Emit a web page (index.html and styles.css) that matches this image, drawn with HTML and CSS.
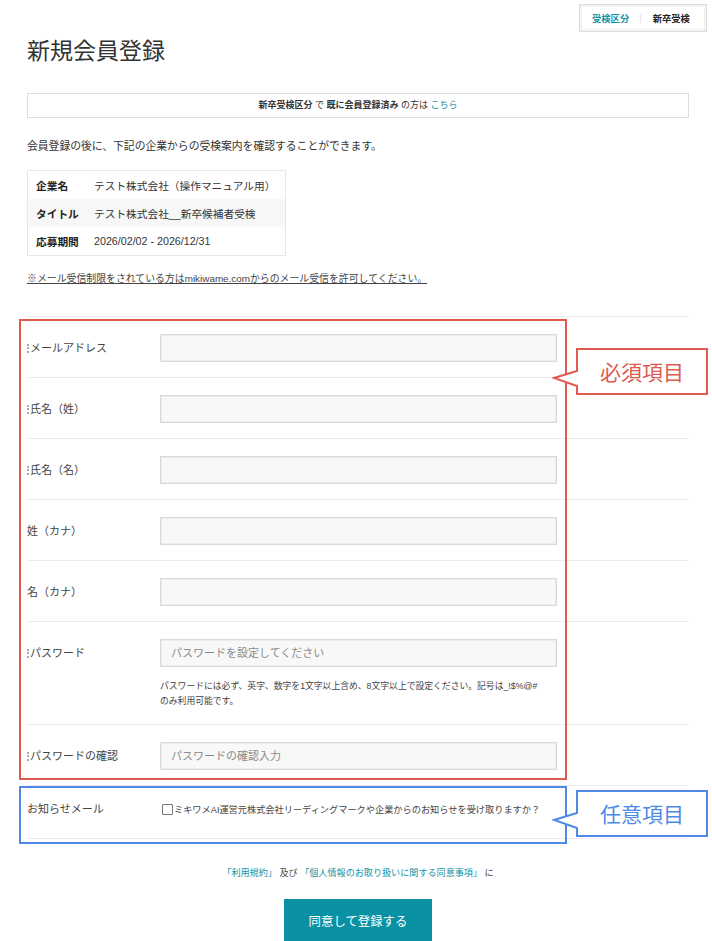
FILE: index.html
```html
<!DOCTYPE html>
<html lang="ja">
<head>
    <meta charset="UTF-8">
    <meta name="viewport" content="width=device-width, initial-scale=1.0">
    <title>新規会員登録</title>
    <link rel="stylesheet" href="styles.css">
</head>
<body>
    <div class="page">
        <div class="topbar">
            <div class="exam-tab">
                <span class="tab-key">受検区分</span>
                <span class="tab-sep">|</span>
                <span class="tab-value">新卒受検</span>
            </div>
        </div>

        <h1 class="title">新規会員登録</h1>

        <div class="notice">
            <b>新卒受検区分</b> で <b>既に会員登録済み</b> の方は <a href="#">こちら</a>
        </div>

        <p class="intro">会員登録の後に、下記の企業からの受検案内を確認することができます。</p>

        <table class="info">
            <tr>
                <th>企業名</th>
                <td>テスト株式会社（操作マニュアル用）</td>
            </tr>
            <tr class="alt">
                <th>タイトル</th>
                <td>テスト株式会社__新卒候補者受検</td>
            </tr>
            <tr>
                <th>応募期間</th>
                <td>2026/02/02 - 2026/12/31</td>
            </tr>
        </table>

        <p class="mail-note">※メール受信制限をされている方はmikiwame.comからのメール受信を許可してください。</p>

        <div class="form">
            <div class="row">
                <div class="label req">メールアドレス</div>
                <div class="field"><input class="input" type="text"></div>
            </div>
            <div class="row">
                <div class="label req">氏名（姓）</div>
                <div class="field"><input class="input" type="text"></div>
            </div>
            <div class="row">
                <div class="label req">氏名（名）</div>
                <div class="field"><input class="input" type="text"></div>
            </div>
            <div class="row">
                <div class="label">姓（カナ）</div>
                <div class="field"><input class="input" type="text"></div>
            </div>
            <div class="row">
                <div class="label">名（カナ）</div>
                <div class="field"><input class="input" type="text"></div>
            </div>
            <div class="row">
                <div class="label req">パスワード</div>
                <div class="field">
                    <input class="input" type="text" placeholder="パスワードを設定してください">
                    <p class="hint">パスワードには必ず、英字、数字を1文字以上含め、8文字以上で設定ください。記号は_!$%@#<br>のみ利用可能です。</p>
                </div>
            </div>
            <div class="row">
                <div class="label req">パスワードの確認</div>
                <div class="field"><input class="input" type="text" placeholder="パスワードの確認入力"></div>
            </div>
            <div class="row row-news">
                <div class="label">お知らせメール</div>
                <div class="field">
                    <label class="check"><span class="box"></span>ミキワメAI運営元株式会社リーディングマークや企業からのお知らせを受け取りますか？</label>
                </div>
            </div>
        </div>

        <p class="terms"><a href="#">「利用規約」</a> 及び <a href="#">「個人情報のお取り扱いに関する同意事項」</a> に</p>

        <div class="actions">
            <button class="submit">同意して登録する</button>
        </div>

        <!-- 注釈 -->
        <div class="frame frame-red"></div>
        <div class="frame frame-blue"></div>
        <div class="callout callout-red">
            <svg width="157" height="48" viewBox="0 0 157 48"><path d="M25 1 H155 V46 H25 V38 L2 30 L25 23 Z"/></svg>
            <span>必須項目</span>
        </div>
        <div class="callout callout-blue">
            <svg width="157" height="48" viewBox="0 0 157 48"><path d="M25 1 H155 V46 H25 V38 L2 30 L25 23 Z"/></svg>
            <span>任意項目</span>
        </div>
    </div>
</body>
</html>
```

FILE: styles.css
```css
body {
    margin: 0;
    background-color: #fff;
    color: #333;
    font-family: "Liberation Sans", "Noto Sans CJK JP", sans-serif;
}
a {
    color: #1493a6;
    text-decoration: none;
}
.page {
    position: relative;
    padding: 0 23px 0 27px;
}
.topbar {
    display: flex;
    justify-content: flex-end;
    padding-top: 4px;
    margin-right: -18px;
}
.exam-tab {
    display: flex;
    align-items: center;
    width: 128px;
    height: 28px;
    box-sizing: border-box;
    padding-left: 12px;
    border: 1px solid #dcdcdc;
    box-shadow: inset 0 0 0 2px #f2f2f2;
    font-size: 9.3px;
    font-weight: bold;
}
.tab-key {
    color: #1493a6;
}
.tab-sep {
    color: #ddd;
    font-weight: normal;
    margin: 0 11px 0 10px;
}
.tab-value {
    color: #222;
}
.title {
    margin: 4px 0 0;
    font-size: 23px;
    line-height: 30px;
    font-weight: normal;
    color: #333;
}
.notice {
    margin-top: 27px;
    height: 25px;
    box-sizing: border-box;
    border: 1px solid #ddd;
    text-align: center;
    font-size: 9px;
    line-height: 23px;
    color: #333;
}
.intro {
    margin: 19px 0 0;
    font-size: 10.8px;
    line-height: 18px;
}
.info {
    margin-top: 15px;
    width: 259px;
    border-collapse: collapse;
    border: 1px solid #e6e6e6;
    font-size: 10.7px;
}
.info th,
.info td {
    height: 28px;
    padding: 0;
    text-align: left;
}
.info th {
    width: 58px;
    padding-left: 8px;
    font-weight: bold;
    color: #222;
}
.info .alt {
    background-color: #f7f7f7;
}
.mail-note {
    margin: 15px 0 0;
    font-size: 9.9px;
    line-height: 16px;
    text-decoration: underline;
    color: #444;
}
.form {
    margin-top: 29px;
    border-bottom: 1px solid #ececec;
}
.row {
    display: flex;
    align-items: flex-start;
    border-top: 1px solid #ececec;
    padding: 17px 0 15px;
}
.label {
    display: flex;
    align-items: center;
    width: 133px;
    white-space: nowrap;
    font-size: 11px;
    line-height: 28px;
    color: #444;
}
/* 左端で切れた必須マークの名残 */
.label.req::before {
    content: "";
    width: 2px;
    height: 9px;
    margin-right: 1px;
    border-left: 2px dotted #aaa;
    box-sizing: border-box;
}
.field {
    width: 397px;
}
.input {
    display: block;
    width: 100%;
    height: 28px;
    box-sizing: border-box;
    margin: 0;
    padding: 0 10px;
    border: 1px solid #d9d9d9;
    box-shadow: inset 0 0 0 1px #ececec;
    background-color: #f8f8f8;
    font-family: inherit;
    font-size: 11px;
    color: #333;
}
.input::placeholder {
    color: #8a8a8a;
}
.hint {
    margin: 12px 0 0;
    font-size: 8.8px;
    line-height: 15px;
    white-space: nowrap;
    color: #444;
}
.row-news {
    padding: 9px 0 15px;
}
.check {
    display: flex;
    align-items: center;
    height: 28px;
    padding-left: 2px;
    font-size: 9.2px;
    white-space: nowrap;
    color: #444;
}
.box {
    width: 9px;
    height: 9px;
    border: 1px solid #777;
    border-radius: 1px;
    margin-right: 1px;
}
.terms {
    margin: 26px 0 0;
    text-align: center;
    font-size: 9.1px;
    line-height: 16px;
    color: #444;
}
.actions {
    display: flex;
    justify-content: center;
    margin-top: 18px;
}
.submit {
    width: 148px;
    height: 44px;
    border: none;
    background-color: #0a91a3;
    color: #fff;
    font-family: inherit;
    font-size: 12.4px;
    cursor: pointer;
}
.frame {
    position: absolute;
    left: 19px;
    width: 548px;
    box-sizing: border-box;
    border: 2px solid;
}
.frame-red {
    top: 319px;
    height: 461px;
    border-color: #e05a4f;
}
.frame-blue {
    top: 786px;
    height: 58px;
    border-color: #4d8ae6;
}
.callout {
    position: absolute;
    left: 552px;
    width: 157px;
    height: 48px;
}
.callout svg {
    position: absolute;
    top: 0;
    left: 0;
}
.callout path {
    fill: #fff;
    stroke-width: 2;
}
.callout span {
    position: absolute;
    top: 0;
    left: 25px;
    right: 2px;
    line-height: 47px;
    text-align: center;
    font-size: 21px;
    font-family: "Noto Sans CJK JP", sans-serif;
}
.callout-red {
    top: 348px;
}
.callout-red path {
    stroke: #e05a4f;
}
.callout-red span {
    color: #e05a4f;
}
.callout-blue {
    top: 790px;
}
.callout-blue path {
    stroke: #4d8ae6;
}
.callout-blue span {
    color: #4d8ae6;
}
```
